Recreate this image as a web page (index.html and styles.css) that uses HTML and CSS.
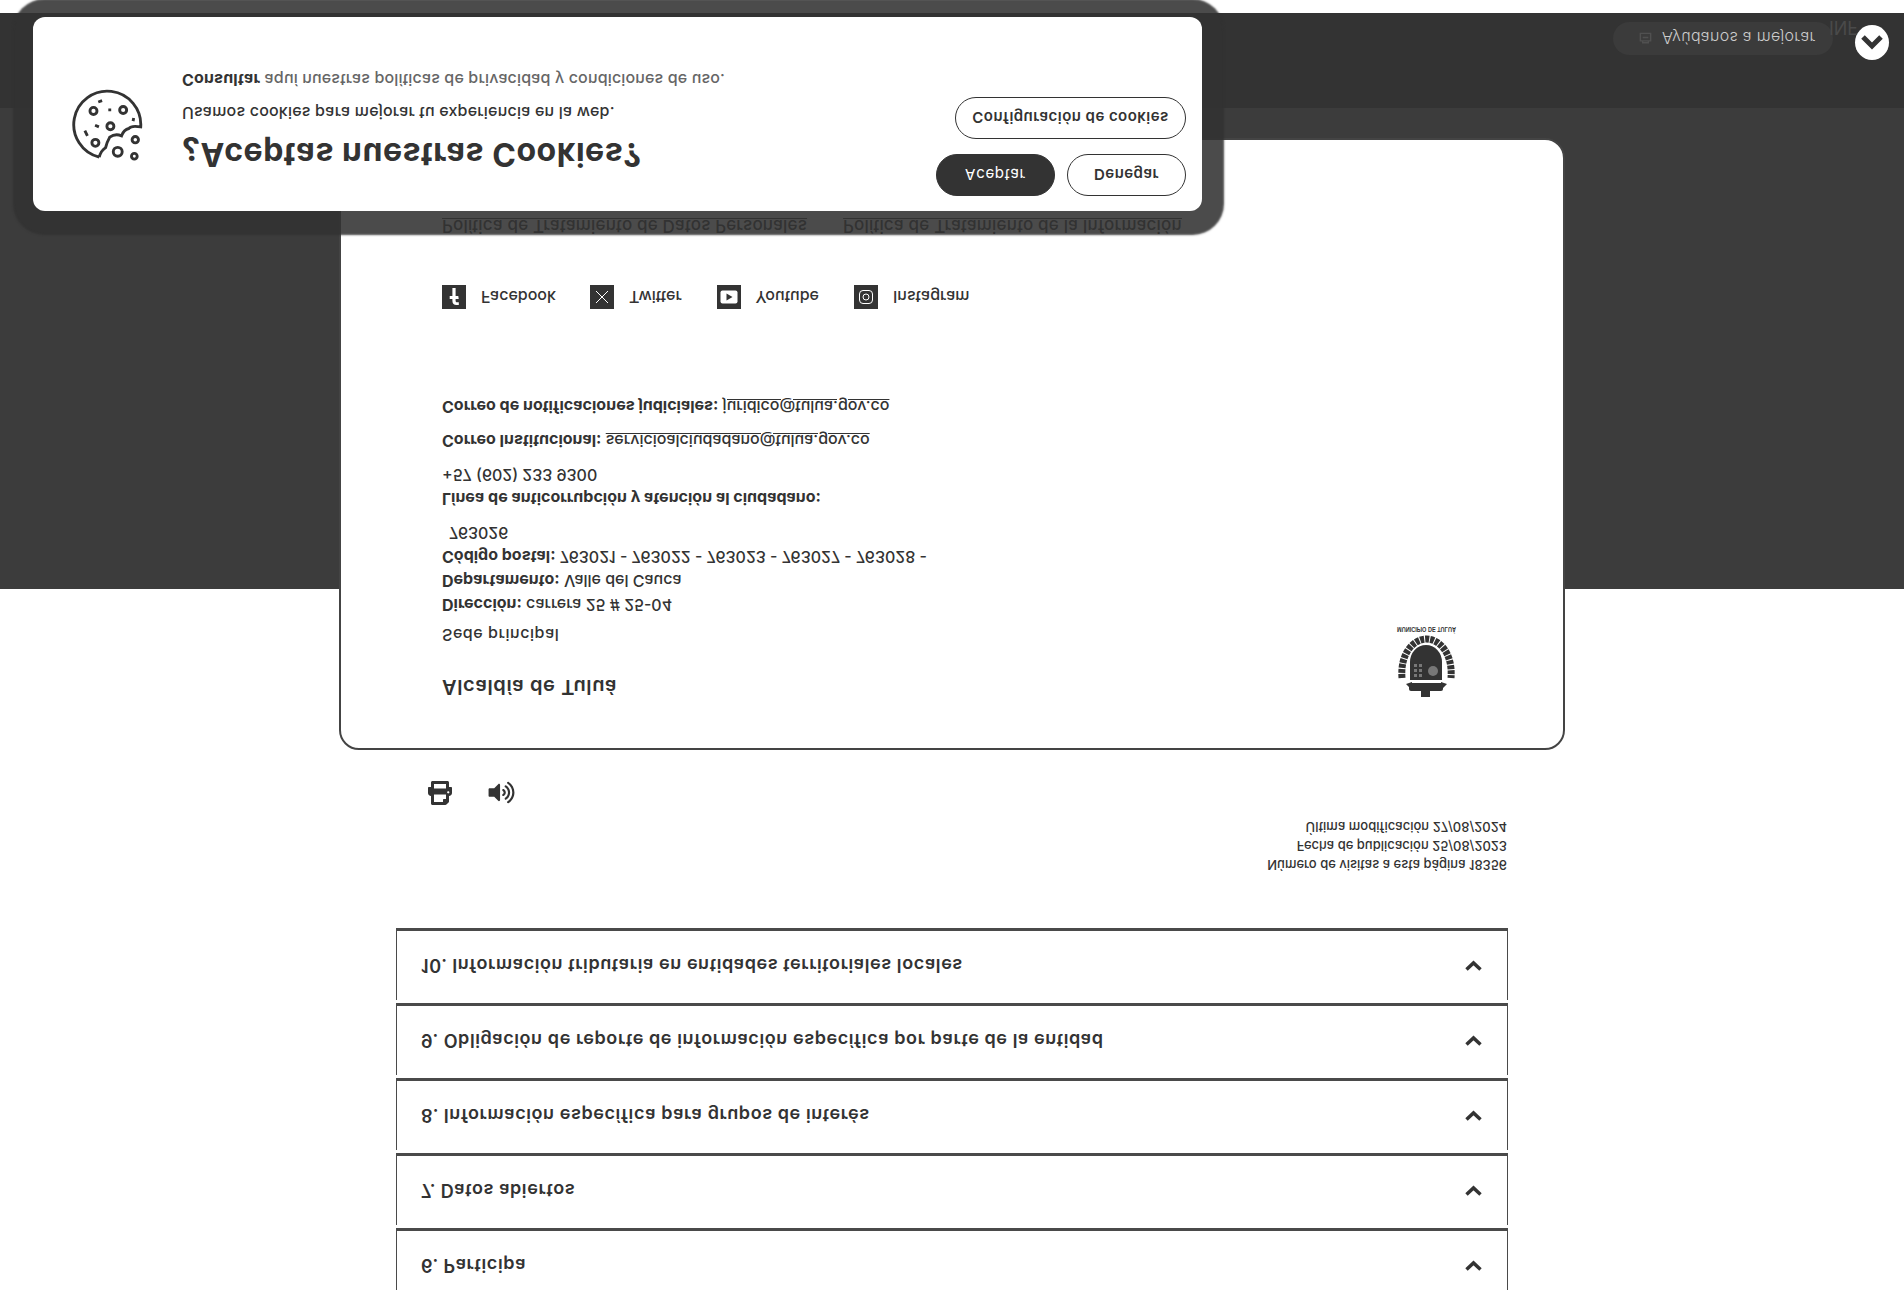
FILE: index.html
```html
<!DOCTYPE html>
<html lang="es">
<head>
    <meta charset="UTF-8">
    <meta name="viewport" content="width=device-width, initial-scale=1.0">
    <title>Alcaldía de Tuluá</title>
    <link rel="stylesheet" href="styles.css">
</head>
<body>
    <!-- la captura de referencia esta volteada en vertical -->
    <div class="page">
        <section class="accordion">
            <div class="accordion-item"><span>6. Participa</span><svg class="chevron" viewBox="0 0 17 11"><polyline points="1.5,1.5 8.5,8 15.5,1.5"/></svg></div>
            <div class="accordion-item"><span>7. Datos abiertos</span><svg class="chevron" viewBox="0 0 17 11"><polyline points="1.5,1.5 8.5,8 15.5,1.5"/></svg></div>
            <div class="accordion-item"><span>8. Información específica para grupos de interés</span><svg class="chevron" viewBox="0 0 17 11"><polyline points="1.5,1.5 8.5,8 15.5,1.5"/></svg></div>
            <div class="accordion-item"><span>9. Obligación de reporte de información específica por parte de la entidad</span><svg class="chevron" viewBox="0 0 17 11"><polyline points="1.5,1.5 8.5,8 15.5,1.5"/></svg></div>
            <div class="accordion-item"><span>10. Información tributaria en entidades territoriales locales</span><svg class="chevron" viewBox="0 0 17 11"><polyline points="1.5,1.5 8.5,8 15.5,1.5"/></svg></div>
        </section>

        <section class="page-meta">
            <div>Número de visitas a esta página 18356</div>
            <div>Fecha de publicación 25/08/2023</div>
            <div>Última modificación 27/08/2024</div>
        </section>

        <div class="tools">
            <svg class="tool-print" viewBox="0 0 512 512"><path d="M448 192V77.25c0-8.49-3.37-16.62-9.37-22.63L393.37 9.37c-6-6-14.14-9.37-22.63-9.37H96C78.33 0 64 14.33 64 32v160c-35.35 0-64 28.65-64 64v112c0 8.84 7.16 16 16 16h48v96c0 17.67 14.33 32 32 32h320c17.67 0 32-14.33 32-32v-96h48c8.84 0 16-7.16 16-16V256c0-35.35-28.65-64-64-64zm-64 256H128v-96h256v96zm0-224H128V64h192v48c0 8.84 7.16 16 16 16h48v96zm48 72c-13.25 0-24-10.75-24-24 0-13.26 10.75-24 24-24s24 10.74 24 24c0 13.25-10.75 24-24 24z"/></svg>
            <svg class="tool-sound" viewBox="0 0 576 512"><path d="M215.03 71.05L126.06 160H24c-13.26 0-24 10.74-24 24v144c0 13.25 10.74 24 24 24h102.06l88.97 88.95c15.03 15.03 40.97 4.47 40.97-16.97V88.02c0-21.46-25.96-32-40.97-16.97zm233.32-51.08c-11.17-7.33-26.18-4.24-33.51 6.95-7.34 11.17-4.22 26.18 6.95 33.51 66.27 43.49 105.82 116.6 105.82 195.58 0 78.98-39.55 152.09-105.82 195.58-11.17 7.32-14.29 22.34-6.95 33.5 7.04 10.71 21.93 14.56 33.51 6.95C528.27 439.58 576 351.33 576 256S528.27 72.43 448.35 19.97zM480 256c0-63.53-32.06-121.94-85.77-156.24-11.19-7.14-26.03-3.82-33.12 7.46s-3.78 26.21 7.41 33.36C408.27 165.97 432 209.11 432 256s-23.73 90.03-63.48 115.42c-11.19 7.14-14.5 22.07-7.41 33.36 6.51 10.36 21.12 15.14 33.12 7.46C447.94 377.94 480 319.54 480 256zm-141.77-76.87c-11.58-6.33-26.19-2.16-32.61 9.45-6.39 11.61-2.16 26.2 9.45 32.61C327.98 228.28 336 241.63 336 256c0 14.38-8.02 27.72-20.92 34.81-11.61 6.41-15.84 21-9.45 32.61 6.44 11.66 21.05 15.8 32.61 9.45 28.23-15.55 45.77-45 45.77-76.88s-17.54-61.32-45.78-76.86z"/></svg>
        </div>

        <footer class="site-footer">
            <div class="footer-main">
                <div class="footer-card">
                    <div class="footer-info">
                        <h2 class="footer-title">Alcaldía de Tuluá</h2>
                        <p class="sede">Sede principal</p>
                        <p class="first"><b>Dirección:</b> carrera 25 # 25-04</p>
                        <p><b>Departamento:</b> Valle del Cauca</p>
                        <p><b>Código postal:</b> 763021 - 763022 - 763023 - 763027 - 763028 -</p>
                        <p class="wrapped">763026</p>
                        <p class="group"><b>Línea de anticorrupción y atención al ciudadano:</b></p>
                        <p>+57 (602) 233 9300</p>
                        <p class="group"><b>Correo Institucional:</b> <a href="#">servicioalciudadano@tulua.gov.co</a></p>
                        <p class="group"><b>Correo de notificaciones judiciales:</b> <a href="#">juridico@tulua.gov.co</a></p>

                        <div class="social">
                            <div class="social-link">
                                <svg class="social-icon" viewBox="0 0 24 24"><rect width="24" height="24"/><path class="icon-fill" d="M13.6 21v-8h2.7l.4-3h-3.1V8.2c0-.9.3-1.5 1.5-1.5h1.7V4c-.3 0-1.3-.1-2.4-.1-2.4 0-4 1.400-4 4.100V10H7.700v3h2.700v8z"/></svg>
                                <span class="fb-label">Facebook</span>
                            </div>
                            <div class="social-link">
                                <svg class="social-icon" viewBox="0 0 24 24"><rect width="24" height="24"/><path class="icon-line" d="M6 6l12 12M18 6L6 18"/></svg>
                                <span class="tw-label">Twitter</span>
                            </div>
                            <div class="social-link">
                                <svg class="social-icon" viewBox="0 0 24 24"><rect width="24" height="24"/><rect class="icon-fill" x="3.500" y="5.500" width="17" height="13" rx="2"/><path d="M9.500 8.500v7l6-3.500z"/></svg>
                                <span class="yt-label">Youtube</span>
                            </div>
                            <div class="social-link">
                                <svg class="social-icon" viewBox="0 0 24 24"><rect width="24" height="24"/><rect class="icon-line" x="5.500" y="5.500" width="13" height="13" rx="3.500"/><circle class="icon-line" cx="12" cy="12" r="3"/></svg>
                                <span>Instagram</span>
                            </div>
                        </div>

                        <div class="policies">
                            <a href="#">Política de Tratamiento de Datos Personales</a>
                            <a href="#">Política de Tratamiento de la Información</a>
                        </div>
                    </div>

                    <svg class="footer-logo" viewBox="-8 0 75 74">
                        <rect x="12" y="6" width="34" height="8" rx="2"/>
                        <rect x="24" y="0" width="9" height="7"/>
                        <path d="M9 13l6-6v8zM50 13l-6-6v8z"/>
                        <path class="logo-wreath" d="M5 19C3 44 17 58 29.500 58 42 58 56 44 54 19"/>
                        <path d="M13 17H45V35A16 17 0 0 1 13 35Z"/>
                        <g class="logo-detail">
                            <rect x="17" y="20" width="3" height="3"/><rect x="22" y="20" width="3" height="3"/>
                            <rect x="17" y="25" width="3" height="3"/><rect x="22" y="25" width="3" height="3"/>
                            <rect x="17" y="30" width="3" height="3"/><rect x="22" y="30" width="3" height="3"/>
                            <circle cx="36" cy="26" r="5"/>
                        </g>
                        <text class="logo-text" x="0" y="70" textLength="59" lengthAdjust="spacingAndGlyphs">MUNICIPIO DE TULUÁ</text>
                    </svg>
                </div>
            </div>
            <div class="footer-bar">
                <span class="faint-tab">INF</span>
                <div class="help-pill">
                    <svg class="help-icon" viewBox="0 0 16 16"><path d="M2.500 5.500h11v8h-11zM5 5.500V3.500h6v2M5 9h6"/></svg>
                    <span>Ayúdanos a mejorar</span>
                </div>
                <div class="up-button"><svg viewBox="0 0 24 16"><polyline points="3,13 12,4 21,13"/></svg></div>
            </div>
        </footer>

        <div class="cookie-modal">
            <svg class="cookie-icon" viewBox="60 50 225 235">
                <path d="M145 65A105 105 0 1 0 275 160Q245 165 238 155Q222 152 215 132Q195 140 178 128Q168 110 165 95Q150 85 145 65"/>
                <circle cx="127" cy="210" r="11"/><circle cx="220" cy="213" r="11"/><circle cx="180" cy="162" r="11"/>
                <circle cx="133" cy="110" r="11"/><circle cx="258" cy="120" r="10"/><circle cx="203" cy="82" r="14"/><circle cx="255" cy="68" r="9"/>
                <path d="M142 238l12 4M178 218v-9M253 188l-2-10M132 165l12-5M100 148l8-16"/>
            </svg>
            <div class="cookie-text">
                <h3>¿Aceptas nuestras Cookies?</h3>
                <p class="cookie-lead">Usamos cookies para mejorar tu experiencia en la web.</p>
                <p class="cookie-link"><b>Consultar</b> aquí nuestras políticas de privacidad y condiciones de uso.</p>
            </div>
            <div class="cookie-actions">
                <div class="cookie-row">
                    <button class="btn btn-dark">Aceptar</button>
                    <button class="btn">Denegar</button>
                </div>
                <button class="btn btn-wide">Configuración de cookies</button>
            </div>
        </div>
    </div>
</body>
</html>
```

FILE: styles.css
```css
html, body {
    margin: 0;
    padding: 0;
    background-color: white;
}

.page {
    position: relative;
    height: 1290px;
    overflow: hidden;
    transform: scaleY(-1);
    font-family: Inter, "Liberation Sans", sans-serif;
    color: #333;
    background-color: white;
}

/* acordeon */
.accordion {
    width: 1112px;
    margin: -10px 0 0 396px;
}

.accordion-item {
    display: flex;
    justify-content: space-between;
    align-items: center;
    box-sizing: border-box;
    height: 72px;
    margin-bottom: 3px;
    padding: 0 25px 0 24px;
    border-left: 1px solid #4a4a4a;
    border-right: 1px solid #4a4a4a;
    border-bottom: 3px solid #4a4a4a;
    font-size: 18px;
    font-weight: 600;
    letter-spacing: 0.58px;
}

.accordion-item:last-child {
    margin-bottom: 0;
}

.chevron {
    width: 17px;
    height: 11px;
    fill: none;
    stroke: #333;
    stroke-width: 3.5;
}

/* datos de la pagina */
.page-meta {
    width: 1111px;
    margin: 54px 0 0 396px;
    font-size: 13px;
    font-weight: 500;
    line-height: 19px;
    text-align: right;
}

.tools {
    display: flex;
    gap: 35px;
    margin: 12px 0 0 427px;
}

.tool-print {
    width: 26px;
    height: 24px;
    fill: #333;
}

.tool-sound {
    width: 27px;
    height: 23px;
    margin-top: 1px;
    fill: #333;
}

/* pie de pagina */
.site-footer {
    margin-top: 192px;
}

.footer-main {
    display: flow-root;
    height: 481px;
    background-color: #3c3c3c;
}

.footer-card {
    display: flex;
    justify-content: space-between;
    box-sizing: border-box;
    width: 1226px;
    height: 612px;
    margin: -161px 0 0 339px;
    padding: 49px 99px 0 101px;
    background-color: white;
    border: 2px solid #444;
    border-radius: 20px;
}

.footer-info p {
    margin: 0;
    font-size: 16px;
    font-weight: 500;
    line-height: 24px;
}

.footer-info a {
    color: #333;
}

.footer-title {
    margin: 0;
    font-size: 20px;
    font-weight: 600;
    line-height: 24px;
    letter-spacing: 0.6px;
}

.footer-info .sede {
    margin-top: 28px;
    letter-spacing: 0.55px;
}

.footer-info .first {
    margin-top: 6px;
}

.footer-info .wrapped {
    padding-left: 7px;
}

.footer-info .group {
    margin-top: 10px;
}

.social {
    display: flex;
    margin-top: 86px;
}

.social-link {
    display: flex;
    align-items: center;
    gap: 15px;
    font-size: 16px;
    font-weight: 500;
}

.social-icon {
    width: 24px;
    height: 24px;
    fill: #333;
}

.fb-label {
    margin-right: 34px;
}

.tw-label {
    margin-right: 35px;
}

.yt-label {
    margin-right: 35px;
}

.icon-fill {
    fill: white;
}

.icon-line {
    fill: none;
    stroke: white;
    stroke-width: 1;
}

.policies {
    display: flex;
    gap: 36px;
    margin-top: 47px;
    font-size: 17px;
    font-weight: 500;
    line-height: 24px;
    letter-spacing: 0.18px;
}

.footer-logo {
    width: 75px;
    height: 74px;
    margin-top: 2px;
    fill: #333;
}

.logo-wreath {
    fill: none;
    stroke: #333;
    stroke-width: 7;
    stroke-dasharray: 4 1;
}

.logo-detail {
    fill: #777;
}

.logo-text {
    font-size: 7px;
    font-weight: 700;
    font-family: "Liberation Sans", sans-serif;
}

.footer-bar {
    position: relative;
    display: flex;
    justify-content: flex-end;
    align-items: flex-end;
    gap: 22px;
    box-sizing: border-box;
    height: 95px;
    padding: 0 15px 9px 0;
    background-color: #333;
}

.faint-tab {
    position: absolute;
    right: 46px;
    bottom: 4px;
    font-size: 18px;
    color: #4a4a4a;
}

.help-pill {
    display: flex;
    align-items: center;
    gap: 9px;
    box-sizing: border-box;
    width: 220px;
    height: 33px;
    padding-left: 25px;
    border-radius: 17px;
    background-color: #3b3b3b;
    font-size: 16px;
    font-weight: 300;
    letter-spacing: 0.3px;
    color: #ccc;
}

.help-icon {
    width: 15px;
    height: 15px;
    fill: none;
    stroke: #505050;
    stroke-width: 1.500;
}

.up-button {
    display: flex;
    justify-content: center;
    align-items: center;
    width: 34px;
    height: 35px;
    margin-bottom: 3px;
    border-radius: 50%;
    background-color: white;
}

.up-button svg {
    width: 24px;
    height: 16px;
    fill: none;
    stroke: #333;
    stroke-width: 5;
}

/* ventana de cookies */
.cookie-modal {
    position: absolute;
    left: 33px;
    top: 1079px;
    display: flex;
    align-items: flex-start;
    box-sizing: border-box;
    width: 1169px;
    height: 194px;
    padding: 39px 16px 0 39px;
    border-radius: 12px;
    background-color: white;
    box-shadow: 1px -3px 2px 21px rgba(50, 50, 50, 0.88);
}

.cookie-icon {
    flex: none;
    width: 72px;
    height: 75px;
    margin: 10px 38px 0 0;
    fill: none;
    stroke: #333;
    stroke-width: 9;
}

.cookie-text {
    flex: 1;
}

.cookie-text h3 {
    margin: 0;
    font-size: 32px;
    font-weight: 700;
    line-height: 36px;
    letter-spacing: 0.55px;
}

.cookie-text p {
    margin: 0;
    font-size: 16px;
    line-height: 22px;
}

.cookie-lead {
    padding-top: 12px;
    font-weight: 500;
    letter-spacing: 0.2px;
}

.cookie-link {
    padding-top: 11px;
    color: #666;
    font-weight: 500;
    letter-spacing: 0.15px;
}

.cookie-link b {
    color: #333;
}

.cookie-actions {
    display: flex;
    flex-direction: column;
    align-items: flex-end;
    gap: 15px;
    margin-top: -24px;
}

.cookie-row {
    display: flex;
    gap: 12px;
}

.btn {
    box-sizing: border-box;
    width: 119px;
    height: 42px;
    border: 1px solid #333;
    border-radius: 21px;
    background-color: white;
    color: #333;
    font-family: Inter, "Liberation Sans", sans-serif;
    font-size: 15px;
    font-weight: 600;
    letter-spacing: 0.45px;
}

.btn-dark {
    background-color: #333;
    color: white;
    font-weight: 400;
    letter-spacing: 0.7px;
}

.btn-wide {
    width: 231px;
}
```
